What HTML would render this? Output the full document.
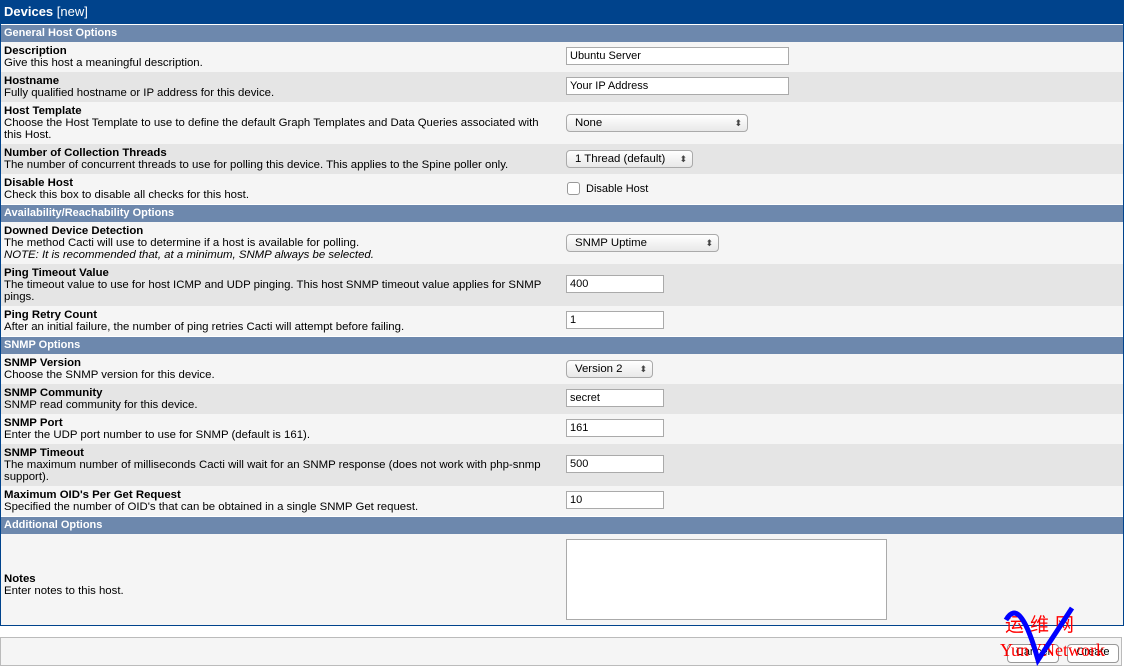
<!DOCTYPE html>
<html><head><meta charset="utf-8"><style>
body{margin:0;background:#fff;font-family:"Liberation Sans","DejaVu Sans",sans-serif;font-size:11.4px;color:#000;width:1124px;height:668px;overflow:hidden;position:relative}
.wrap{position:absolute;left:0;top:0;width:1122px;height:624px;border:1px solid #00438c;background:#f5f5f5}
.r{position:absolute;left:0;width:1122px}
.t{background:#00438c;color:#fff;font-weight:bold;font-size:13px;line-height:22px;padding-left:3px;box-sizing:border-box;height:23px}
.t span{font-weight:normal}
.s{background:#6d88ad;color:#fff;font-weight:bold;line-height:17px;padding-left:3px;box-sizing:border-box;border-top:1px solid #fff;font-size:11px}
.l{background:#f5f5f5}.d{background:#e5e5e5}
.lab{position:absolute;left:3px;top:3px;width:548px;line-height:12px}
.lab b{display:block}
.in{position:absolute;left:565px;height:18px;border:1px solid #aaa;background:#fff;box-sizing:border-box;padding-left:3px;line-height:16px;font-size:11px}
.sel{position:absolute;left:565px;height:18px;border:1px solid #aaa;border-radius:4px;background:linear-gradient(#fff,#e8e8e8);box-sizing:border-box;padding-left:8px;line-height:16px}
.sel:after{content:"⬍";position:absolute;right:5px;top:0;font-size:9px;color:#444}
</style></head><body>
<div class="wrap">
<div class="r t" style="top:0">Devices <span>[new]</span></div>
<div class="r s" style="top:23px;height:18px">General Host Options</div>
<div class="r l" style="top:41px;height:30px"><div class="lab"><b>Description</b>Give this host a meaningful description.</div><div class="in" style="top:5px;width:223px">Ubuntu Server</div></div>
<div class="r d" style="top:71px;height:30px"><div class="lab"><b>Hostname</b>Fully qualified hostname or IP address for this device.</div><div class="in" style="top:5px;width:223px">Your IP Address</div></div>
<div class="r l" style="top:101px;height:42px"><div class="lab"><b>Host Template</b>Choose the Host Template to use to define the default Graph Templates and Data Queries associated with this Host.</div><div class="sel" style="top:12px;width:182px">None</div></div>
<div class="r d" style="top:143px;height:30px"><div class="lab"><b>Number of Collection Threads</b>The number of concurrent threads to use for polling this device. This applies to the Spine poller only.</div><div class="sel" style="top:6px;width:127px">1 Thread (default)</div></div>
<div class="r l" style="top:173px;height:30px"><div class="lab"><b>Disable Host</b>Check this box to disable all checks for this host.</div><div style="position:absolute;left:566px;top:8px;width:11px;height:11px;border:1px solid #999;border-radius:3px;background:#fff"></div><div style="position:absolute;left:585px;top:9px;font-size:11px">Disable Host</div></div>
<div class="r s" style="top:203px;height:18px">Availability/Reachability Options</div>
<div class="r l" style="top:221px;height:42px"><div class="lab"><b>Downed Device Detection</b>The method Cacti will use to determine if a host is available for polling.<br><i>NOTE: It is recommended that, at a minimum, SNMP always be selected.</i></div><div class="sel" style="top:12px;width:153px">SNMP Uptime</div></div>
<div class="r d" style="top:263px;height:42px"><div class="lab"><b>Ping Timeout Value</b>The timeout value to use for host ICMP and UDP pinging. This host SNMP timeout value applies for SNMP pings.</div><div class="in" style="top:11px;width:98px">400</div></div>
<div class="r l" style="top:305px;height:30px"><div class="lab"><b>Ping Retry Count</b>After an initial failure, the number of ping retries Cacti will attempt before failing.</div><div class="in" style="top:5px;width:98px">1</div></div>
<div class="r s" style="top:335px;height:18px">SNMP Options</div>
<div class="r l" style="top:353px;height:30px"><div class="lab"><b>SNMP Version</b>Choose the SNMP version for this device.</div><div class="sel" style="top:6px;width:87px">Version 2</div></div>
<div class="r d" style="top:383px;height:30px"><div class="lab"><b>SNMP Community</b>SNMP read community for this device.</div><div class="in" style="top:5px;width:98px">secret</div></div>
<div class="r l" style="top:413px;height:30px"><div class="lab"><b>SNMP Port</b>Enter the UDP port number to use for SNMP (default is 161).</div><div class="in" style="top:5px;width:98px">161</div></div>
<div class="r d" style="top:443px;height:42px"><div class="lab"><b>SNMP Timeout</b>The maximum number of milliseconds Cacti will wait for an SNMP response (does not work with php-snmp support).</div><div class="in" style="top:11px;width:98px">500</div></div>
<div class="r l" style="top:485px;height:30px"><div class="lab"><b>Maximum OID's Per Get Request</b>Specified the number of OID's that can be obtained in a single SNMP Get request.</div><div class="in" style="top:5px;width:98px">10</div></div>
<div class="r s" style="top:515px;height:18px">Additional Options</div>
<div class="r l" style="top:533px;height:90px"><div class="lab" style="top:39px"><b>Notes</b>Enter notes to this host.</div><div class="in" style="top:5px;width:321px;height:81px"></div></div>
</div>
<div style="position:absolute;left:0;top:637px;width:1122px;height:29px;border:1px solid #bbb;background:#f5f5f5;box-sizing:border-box">
<div style="position:absolute;left:1006px;top:6px;width:50px;height:17px;border:1px solid #999;border-radius:4px;background:#fff;text-align:center;line-height:15px;font-size:11px">Cancel</div>
<div style="position:absolute;left:1066px;top:6px;width:50px;height:17px;border:1px solid #999;border-radius:4px;background:#fff;text-align:center;line-height:15px;font-size:11px">Create</div>
</div>
<div style="position:absolute;left:1005px;top:610px;color:#f00;font-family:'Noto Sans CJK SC',sans-serif;font-size:19px;letter-spacing:6px">运维网</div>
<div style="position:absolute;left:1000px;top:640px;color:#f00;font-family:'Liberation Serif',serif;font-size:18px">YunVNetwork</div>
<svg style="position:absolute;left:1000px;top:600px" width="110" height="70"><path d="M6 20 Q20 -5 38 60 L72 8" fill="none" stroke="#00f" stroke-width="5"/></svg>
</body></html>
